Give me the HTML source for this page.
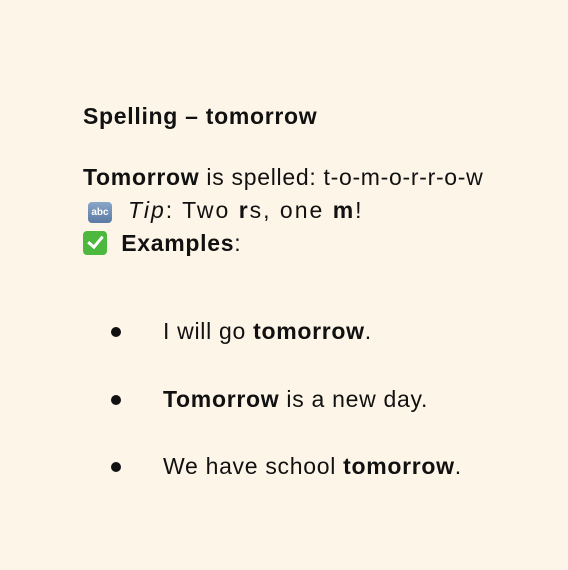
<!DOCTYPE html>
<html><head><style>
body{margin:0;width:568px;height:570px;background:#fdf5e8;font-family:"Liberation Sans",sans-serif;font-size:23px;letter-spacing:0.7px;color:#111;position:relative;overflow:hidden}
.t{position:absolute;white-space:nowrap;line-height:26px}
.abc{display:inline-block;width:24px;height:21px;border-radius:4px;background:linear-gradient(#8aa6c8,#5a7ba6);color:#fff;font-size:10px;letter-spacing:0;font-weight:bold;text-align:center;line-height:21px;vertical-align:3px}
.chk{display:inline-block;width:24px;height:24px;border-radius:4px;background:#4cb83d;vertical-align:-4px;position:relative}
.chk:after{content:"";position:absolute;left:8px;top:2px;width:6px;height:12px;border:solid #fff;border-width:0 3px 3px 0;transform:rotate(40deg)}
.dot{position:absolute;width:10px;height:10px;border-radius:50%;background:#111}
</style></head><body>
<div class="t" style="left:83px;top:103px"><b>Spelling – tomorrow</b></div>
<div class="t" style="left:83px;top:164px"><b>Tomorrow</b> is spelled: t-o-m-o-r-r-o-w</div>
<div class="t" style="left:88px;top:197px"><span class="abc">abc</span><span style="display:inline-block;width:16px"></span><span style="letter-spacing:2px"><i>Tip</i>: Two <b>r</b>s, one <b>m</b>!</span></div>
<div class="t" style="left:83px;top:230px"><span class="chk"></span>&nbsp; <b>Examples</b>:</div>
<div class="dot" style="left:111px;top:327px"></div>
<div class="t" style="left:163px;top:318px">I will go <b>tomorrow</b>.</div>
<div class="dot" style="left:111px;top:395px"></div>
<div class="t" style="left:163px;top:386px"><b>Tomorrow</b> is a new day.</div>
<div class="dot" style="left:111px;top:462px"></div>
<div class="t" style="left:163px;top:453px">We have school <b>tomorrow</b>.</div>
</body></html>
